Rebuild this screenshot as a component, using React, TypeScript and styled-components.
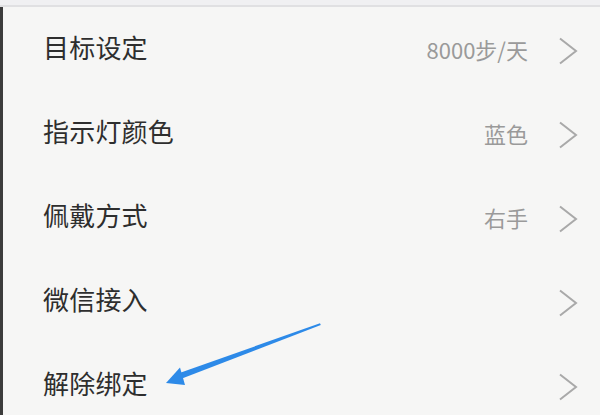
import React from "react";
import styled, { createGlobalStyle } from "styled-components";

const Global = createGlobalStyle`
  html, body { margin: 0; padding: 0; background: #f6f6f5; }
  body { font-family: "Noto Sans CJK SC", "Noto Sans", sans-serif; }
  * { box-sizing: border-box; }
`;

const Screen = styled.div`
  position: relative;
  width: 600px;
  height: 415px;
  overflow: hidden;
  background: #f6f6f5;
  display: flex;
  flex-direction: column;
`;

const TopStrip = styled.div`
  height: 7px;
  flex: none;
  background: #f0f0f2;
  border-bottom: 2px solid #e0e0e2;
`;

const Body = styled.div`
  flex: 1;
  display: flex;
`;

const EdgeBar = styled.div`
  width: 3px;
  flex: none;
  background: #3c3c3c;
`;

const List = styled.div`
  flex: 1;
  display: flex;
  flex-direction: column;
`;

const Row = styled.div`
  height: 84px;
  flex: none;
  display: flex;
  align-items: center;
  padding: 0 22px 5px 40px;
`;

const Label = styled.span`
  flex: 1;
  font-size: 26px;
  color: #2e2e2e;
  letter-spacing: 0.2px;
`;

const Value = styled.span`
  font-size: 22px;
  color: #9a9a9a;
  margin-right: 30px;
  margin-top: 4px;
`;

const Chevron = styled.svg`
  width: 20px;
  height: 28px;
  margin-top: 8px;
  flex: none;
`;

const Arrow = styled.svg`
  position: absolute;
  left: 0;
  top: 0;
  width: 600px;
  height: 415px;
  pointer-events: none;
`;

const rows = [
  { label: "目标设定", value: "8000步/天" },
  { label: "指示灯颜色", value: "蓝色" },
  { label: "佩戴方式", value: "右手" },
  { label: "微信接入", value: "" },
  { label: "解除绑定", value: "" },
];

export default function App() {
  return (
    <>
      <Global />
      <Screen>
        <TopStrip />
        <Body>
          <EdgeBar />
          <List>
            {rows.map((r) => (
              <Row key={r.label}>
                <Label>{r.label}</Label>
                {r.value && <Value>{r.value}</Value>}
                <Chevron viewBox="0 0 20 28">
                  <polyline
                    points="2,1.5 18,14 2,26.5"
                    fill="none"
                    stroke="#a9a9a9"
                    strokeWidth="2"
                    strokeLinejoin="miter"
                  />
                </Chevron>
              </Row>
            ))}
          </List>
        </Body>
        <Arrow viewBox="0 0 600 415">
          <polygon
            points="320,323.2 320.8,325 182,378.5 179.5,373"
            fill="#2d8ae8"
          />
          <polygon points="166,383 180,367.5 185,385" fill="#2d8ae8" />
        </Arrow>
      </Screen>
    </>
  );
}
